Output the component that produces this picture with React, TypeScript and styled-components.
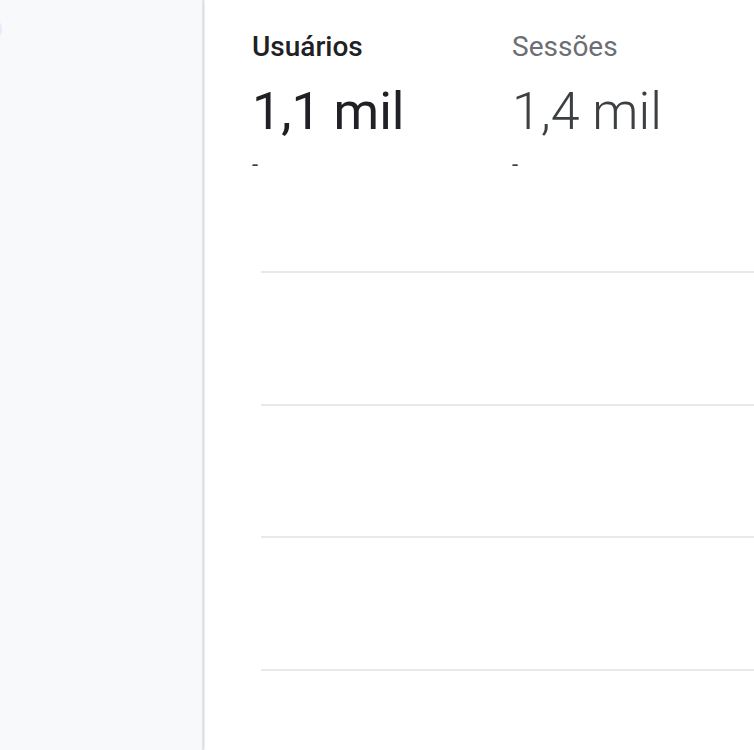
import React from "react";
import styled, { createGlobalStyle } from "styled-components";

const Global = createGlobalStyle`
  html, body { margin: 0; padding: 0; background: #ffffff; }
  body { font-family: Roboto, "Noto Sans", Arial, sans-serif; overflow: hidden; }
`;

const Page = styled.div`
  display: flex;
  width: 754px;
  height: 750px;
  overflow: hidden;
`;

const Sidebar = styled.aside`
  width: 202px;
  flex: 0 0 202px;
  background: #f8f9fa;
  box-shadow: 1px 0 2px rgba(60, 64, 67, 0.25);
  border-right: 1px solid #e3e5e8;
  padding-top: 16px;
  position: relative;
  z-index: 1;
`;

const NavPill = styled.div`
  width: 30px;
  height: 26px;
  margin-left: -28px;
  border-radius: 13px;
  background: #e3ecfd;
`;

const Main = styled.main`
  flex: 1;
  display: flex;
  flex-direction: column;
  padding: 30px 0 0 49px;
  background: #fff;
`;

const Tabs = styled.div`
  display: flex;
`;

const Tab = styled.div`
  width: 260px;
  display: flex;
  flex-direction: column;
`;

const Label = styled.div<{ $active?: boolean }>`
  font-size: 28px;
  line-height: 34px;
  font-weight: ${(p) => (p.$active ? 500 : 400)};
  color: ${(p) => (p.$active ? "#202124" : "#6b6e72")};
`;

const Value = styled.div<{ $active?: boolean }>`
  font-size: 52px;
  line-height: 64px;
  margin-top: 16px;
  font-weight: ${(p) => (p.$active ? 400 : 300)};
  color: ${(p) => (p.$active ? "#202124" : "#3c4043")};
`;

const Delta = styled.div`
  font-size: 22px;
  line-height: 22px;
  color: #3c4043;
  margin-top: 10px;
`;

const Chart = styled.div`
  margin-top: 95px;
  margin-left: 9px;
  display: flex;
  flex-direction: column;
  gap: 130.6px;
`;

const GridLine = styled.div`
  height: 2px;
  background: #e9e9e9;
`;

export default function App() {
  return (
    <>
      <Global />
      <Page>
        <Sidebar>
          <NavPill />
        </Sidebar>
        <Main>
          <Tabs>
            <Tab>
              <Label $active>Usuários</Label>
              <Value $active>1,1 mil</Value>
              <Delta>-</Delta>
            </Tab>
            <Tab>
              <Label>Sessões</Label>
              <Value>1,4 mil</Value>
              <Delta>-</Delta>
            </Tab>
          </Tabs>
          <Chart>
            <GridLine />
            <GridLine />
            <GridLine />
            <GridLine />
          </Chart>
        </Main>
      </Page>
    </>
  );
}
